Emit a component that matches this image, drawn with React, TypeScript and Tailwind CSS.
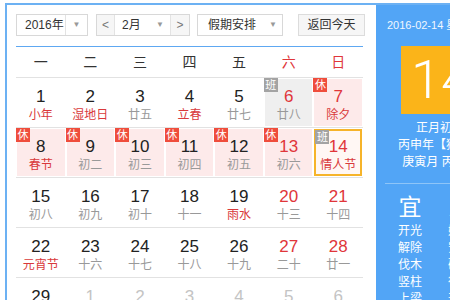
import React from "react";

type Day = {
  n: number;
  l: string;
  red?: boolean;
  lr?: boolean;
  badge?: "休" | "班";
  bg?: "pink" | "gray";
  sel?: boolean;
  dim?: boolean;
};

const weeks: Day[][] = [
  [
    { n: 1, l: "小年", lr: true },
    { n: 2, l: "湿地日", lr: true },
    { n: 3, l: "廿五" },
    { n: 4, l: "立春", lr: true },
    { n: 5, l: "廿七" },
    { n: 6, l: "廿八", red: true, badge: "班", bg: "gray" },
    { n: 7, l: "除夕", red: true, lr: true, badge: "休", bg: "pink" },
  ],
  [
    { n: 8, l: "春节", lr: true, badge: "休", bg: "pink" },
    { n: 9, l: "初二", badge: "休", bg: "pink" },
    { n: 10, l: "初三", badge: "休", bg: "pink" },
    { n: 11, l: "初四", badge: "休", bg: "pink" },
    { n: 12, l: "初五", badge: "休", bg: "pink" },
    { n: 13, l: "初六", red: true, badge: "休", bg: "pink" },
    { n: 14, l: "情人节", red: true, lr: true, badge: "班", sel: true },
  ],
  [
    { n: 15, l: "初八" },
    { n: 16, l: "初九" },
    { n: 17, l: "初十" },
    { n: 18, l: "十一" },
    { n: 19, l: "雨水", lr: true },
    { n: 20, l: "十三", red: true },
    { n: 21, l: "十四", red: true },
  ],
  [
    { n: 22, l: "元宵节", lr: true },
    { n: 23, l: "十六" },
    { n: 24, l: "十七" },
    { n: 25, l: "十八" },
    { n: 26, l: "十九" },
    { n: 27, l: "二十", red: true },
    { n: 28, l: "廿一", red: true },
  ],
  [
    { n: 29, l: "廿二" },
    { n: 1, l: "廿三", dim: true },
    { n: 2, l: "廿四", dim: true },
    { n: 3, l: "廿五", dim: true },
    { n: 4, l: "廿六", dim: true },
    { n: 5, l: "廿七", dim: true },
    { n: 6, l: "廿八", dim: true },
  ],
];

const weekdays = ["一", "二", "三", "四", "五", "六", "日"];

function Arrow() {
  return <span className="text-[8px] text-[#999]">▼</span>;
}

function Cell({ d }: { d: Day }) {
  const inner =
    d.sel
      ? "border-2 border-[#f6b42a] bg-[#fff7f4]"
      : d.bg === "pink"
      ? "bg-[#fdeaea]"
      : d.bg === "gray"
      ? "bg-[#efefef]"
      : "";
  const num = d.dim ? "text-[#c4c4c4]" : d.red ? "text-[#e0363a]" : "text-[#222]";
  const lab = d.dim ? "text-[#cfcfcf]" : d.lr ? "text-[#d9393b]" : "text-[#999]";
  return (
    <div className="h-full p-px">
      <div className={`relative h-full flex flex-col items-center ${d.sel ? "pt-[6px]" : "pt-[8px]"} ${inner}`}>
        {d.badge && (
          <span
            className={`absolute -top-px -left-px w-[14px] h-[14px] flex items-center justify-center text-[11px] leading-none text-white ${
              d.badge === "休" ? "bg-[#ef4d3c]" : "bg-[#a3a3a3]"
            }`}
          >
            {d.badge}
          </span>
        )}
        <span className={`text-[17px] leading-[20px] ${num}`}>{d.n}</span>
        <span className={`text-[12px] leading-[16px] ${lab}`}>{d.l}</span>
      </div>
    </div>
  );
}

export default function App() {
  return (
    <div className="w-[450px] h-[300px] overflow-hidden bg-white font-['Liberation_Sans','Noto_Sans_CJK_SC',sans-serif]">
      <div className="ml-[5px] mt-[3px] flex w-[504px] border-l-2 border-t-2 border-[#6cb1f3]">
        {/* calendar */}
        <div className="w-[369px] shrink-0 pl-[9px] pt-[9px]">
          <div className="flex items-center h-[22px] text-[12px] text-[#333]">
            <div className="w-[72px] h-full flex border border-[#d8d8d8]">
              <span className="flex-1 flex items-center pl-[8px]">2016年</span>
              <span className="w-[22px] flex items-center justify-center border-l border-[#e3e3e3]">
                <Arrow />
              </span>
            </div>
            <div className="ml-[8px] w-[94px] h-full flex border border-[#d8d8d8]">
              <span className="w-[18px] flex items-center justify-center bg-[#f6f6f6] border-r border-[#e3e3e3] text-[#777]">
                &lt;
              </span>
              <span className="flex-1 flex items-center pl-[7px]">2月</span>
              <span className="w-[20px] flex items-center justify-center">
                <Arrow />
              </span>
              <span className="w-[19px] flex items-center justify-center bg-[#f6f6f6] border-l border-[#e3e3e3] text-[#777]">
                &gt;
              </span>
            </div>
            <div className="ml-[7px] w-[86px] h-full flex border border-[#d8d8d8]">
              <span className="flex-1 flex items-center pl-[10px]">假期安排</span>
              <span className="w-[18px] flex items-center justify-center">
                <Arrow />
              </span>
            </div>
            <div className="ml-[15px] w-[67px] h-full flex items-center justify-center border border-[#dcdcdc] bg-[#f6f6f6]">
              返回今天
            </div>
          </div>

          <div className="mt-[10px] w-[347px] h-px bg-[#5ea8f2]" />

          <div className="w-[347px] grid grid-cols-7 h-[31px] border-b border-[#e2e2e2] text-[14px]">
            {weekdays.map((w, i) => (
              <div
                key={w}
                className={`flex items-center justify-center ${i > 4 ? "text-[#e0363a]" : "text-[#333]"}`}
              >
                {w}
              </div>
            ))}
          </div>

          {weeks.map((wk, i) => (
            <div key={i} className="w-[347px] grid grid-cols-7 h-[50px] border-b border-[#e2e2e2]">
              {wk.map((d, j) => (
                <Cell key={j} d={d} />
              ))}
            </div>
          ))}
        </div>

        {/* side panel */}
        <div className="w-[128px] shrink-0 bg-[#52a5f6] text-white pt-[12px]">
          <div className="pl-[11px] text-[11px] leading-[16px] whitespace-nowrap text-[#f0f7ff]">
            2016-02-14 星期日
          </div>
          <div className="ml-[25px] mt-[13px] w-[80px] h-[68px] bg-[#fbb419] flex items-center justify-center">
            <span className="font-['Roboto',sans-serif] font-light text-[54px] leading-none">14</span>
          </div>
          <div className="mt-[6px] text-[12px] leading-[17px] text-center whitespace-nowrap">
            <div>正月初一</div>
            <div>丙申年【猴年】</div>
            <div>庚寅月 丙午日</div>
          </div>
          <div className="mx-[9px] mt-[12px] h-px bg-[#8ec5f8]" />
          <div className="mt-[10px] pl-[9px] flex">
            <div className="w-[50px] flex flex-col items-center">
              <span className="text-[23px] leading-[27px]">宜</span>
              <div className="mt-[2px] text-[12px] leading-[17px] text-center">
                <div>开光</div>
                <div>解除</div>
                <div>伐木</div>
                <div>竖柱</div>
                <div>上梁</div>
              </div>
            </div>
            <div className="w-[50px] flex flex-col items-center">
              <span className="text-[23px] leading-[27px]">忌</span>
              <div className="mt-[2px] text-[12px] leading-[17px] text-center">
                <div>嫁娶</div>
                <div>安葬</div>
                <div>破土</div>
                <div>行丧</div>
                <div>开市</div>
              </div>
            </div>
          </div>
        </div>
      </div>
    </div>
  );
}
